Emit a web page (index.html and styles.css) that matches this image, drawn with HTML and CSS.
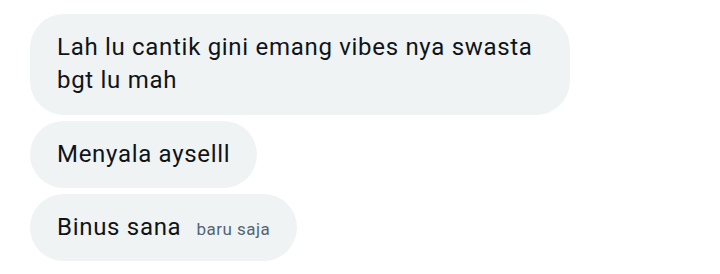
FILE: index.html
```html
<!DOCTYPE html>
<html>
    <head>
        <title>Pesan</title>
        <link rel="stylesheet" href="styles.css">
    </head>
    <body>
        <div class="thread">
            <div class="bubble">Lah lu cantik gini emang vibes nya swasta bgt lu mah</div>
            <div class="bubble">Menyala ayselll</div>
            <div class="bubble">Binus sana<span class="time">baru saja</span></div>
        </div>
    </body>
</html>
```

FILE: styles.css
```css
body {
    margin: 0;
    background: #ffffff;
    font-family: Roboto, "Noto Sans", sans-serif;
    color: #0f1419;
}
.thread {
    display: flex;
    flex-direction: column;
    align-items: flex-start;
    gap: 6px;
    padding: 14px 30px;
}
.bubble {
    box-sizing: border-box;
    max-width: 540px;
    background: #eff3f4;
    border-radius: 34px;
    padding: 17px 27px;
    font-size: 24px;
    line-height: 33px;
    letter-spacing: 0.7px;
}
.bubble:first-child {
    padding-bottom: 18px;
}
.time {
    font-size: 17px;
    line-height: 1;
    letter-spacing: 0.5px;
    color: #536471;
    margin-left: 15px;
}
```
